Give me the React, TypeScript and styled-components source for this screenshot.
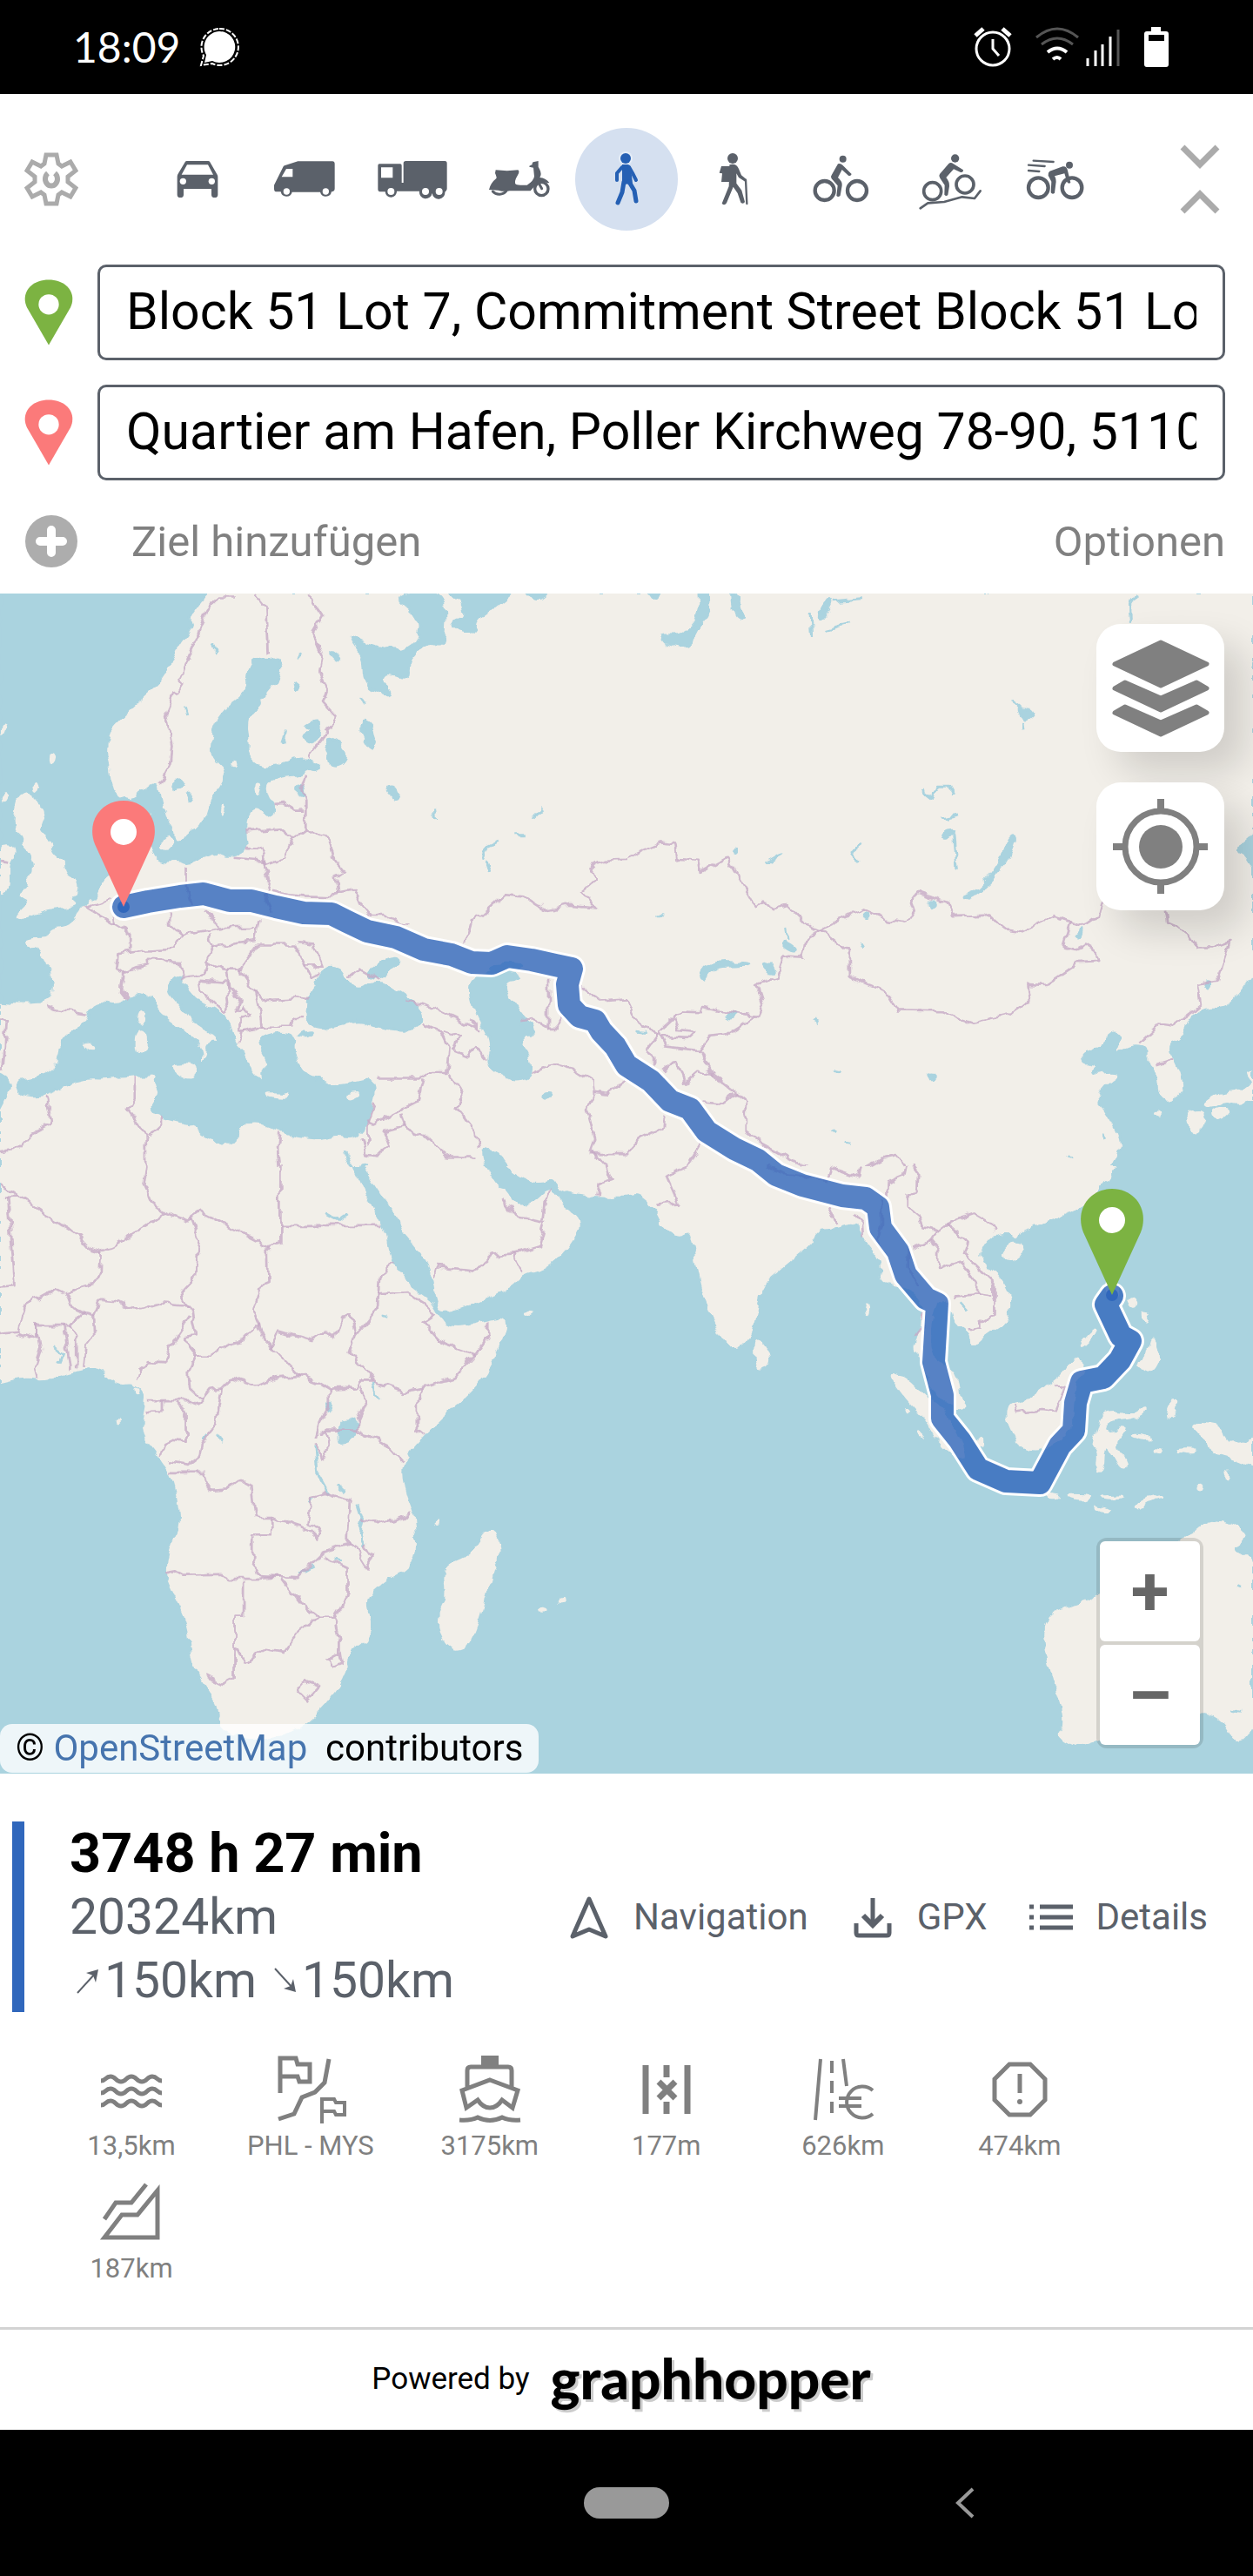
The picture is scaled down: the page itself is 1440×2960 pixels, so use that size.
import React from "react";
import styled, { createGlobalStyle } from "styled-components";

const GlobalStyle = createGlobalStyle`
  * { box-sizing: border-box; }
  body { margin: 0; background: #fff; }
  button, input { font: inherit; color: inherit; }
  svg { display: block; flex: none; }
`;

const slate = "#5b616a";
const grey = "#808080";
const blue = "#3067bc";

const Page = styled.div`
  display: flex;
  flex-direction: column;
  min-height: 100vh;
  font-family: Roboto, "Liberation Sans", sans-serif;
  color: #000;
`;

const PlainButton = styled.button`
  display: flex;
  align-items: center;
  padding: 0;
  border: 0;
  background: none;
  cursor: pointer;
`;

/* ---------- system bars ---------- */

const StatusBar = styled.div`
  display: flex;
  align-items: center;
  justify-content: space-between;
  height: 108px;
  padding: 0 94px 0 84px;
  background: #000;
  color: #fff;
`;

const Clock = styled.div`
  display: flex;
  align-items: center;
  gap: 22px;
  font-family: Lato, "Open Sans", sans-serif;
  font-size: 48px;
  line-height: 60px;
`;

const NavBar = styled.nav`
  display: grid;
  grid-template-columns: 1fr 98px 1fr;
  align-items: center;
  height: 168px;
  background: #000;
`;

const HomePill = styled(PlainButton)`
  grid-column: 2;
  height: 36px;
  border-radius: 18px;
  background: #999;
`;

const BackButton = styled(PlainButton)`
  justify-self: center;
  padding-left: 8px;
`;

/* ---------- search panel ---------- */

const Toolbar = styled.header`
  display: grid;
  grid-template-columns: 1fr auto 1fr;
  align-items: center;
  padding: 39px 28px;
`;

const Profiles = styled.div`
  display: flex;
  gap: 5px;
`;

const ProfileButton = styled(PlainButton)<{ $active?: boolean }>`
  width: 118px;
  height: 118px;
  border-radius: 50%;
  background: ${(p) => (p.$active ? "#d5e0f0" : "none")};
  color: ${(p) => (p.$active ? "#2560b4" : slate)};
`;

const Collapse = styled(PlainButton)`
  justify-self: end;
  padding-right: 10px;
`;

const Waypoints = styled.div`
  display: flex;
  flex-direction: column;
  gap: 28px;
  padding: 0 32px 18px 28px;
`;

const Waypoint = styled.label`
  display: flex;
  align-items: center;
  gap: 28px;
`;

const AddressInput = styled.input`
  flex: 1;
  min-width: 0;
  height: 110px;
  padding: 0 30px 4px;
  border: 3px solid ${slate};
  border-radius: 10px;
  background: #fff;
  font-size: 59px;
`;

const PanelActions = styled.div`
  display: flex;
  align-items: center;
  justify-content: space-between;
  height: 84px;
  color: ${grey};
  font-size: 49px;
`;

const AddButton = styled(PlainButton)`
  gap: 61px;
`;

/* ---------- map ---------- */

const MapArea = styled.main`
  position: relative;
  flex: 1;
  min-height: 1355px;
  overflow: hidden;
  background: #aad3df;
`;

const MapDrawing = styled.svg`
  position: absolute;
  inset: 0;
  width: 100%;
  height: 100%;
`;

const MapTools = styled.div`
  position: absolute;
  top: 35px;
  right: 33px;
  display: flex;
  flex-direction: column-reverse;
  gap: 35px;
`;

const MapTool = styled(PlainButton)`
  width: 147px;
  height: 147px;
  border-radius: 28px;
  background: #fff;
  color: ${grey};
  box-shadow: 24px 24px 44px rgba(0, 0, 0, 0.14);
`;

const ZoomControl = styled.div`
  position: absolute;
  right: 57px;
  bottom: 29px;
  display: flex;
  flex-direction: column;
  gap: 4px;
  padding: 4px;
  border-radius: 12px;
  background: rgba(0, 0, 0, 0.12);
`;

const ZoomButton = styled(PlainButton)`
  justify-content: center;
  width: 115px;
  height: 115px;
  border-radius: 6px;
  background: #fff;
  color: #666;
  font-size: 80px;
  font-weight: 700;
  line-height: 80px;
`;

const Attribution = styled.div`
  position: absolute;
  left: 0;
  bottom: 1px;
  padding: 0 18px;
  border-radius: 14px;
  background: rgba(255, 255, 255, 0.8);
  font-size: 42px;
  line-height: 56px;
  white-space: pre;
`;

const MapLink = styled.a`
  color: #4674ae;
  text-decoration: none;
`;

/* ---------- result ---------- */

const Result = styled.section`
  padding: 55px 52px 49px 14px;
`;

const Summary = styled.div`
  display: flex;
  align-items: center;
  justify-content: space-between;
  padding-left: 52px;
  border-left: 14px solid ${blue};
`;

const Figures = styled.div`
  color: ${slate};
  font-size: 57px;
  line-height: 73px;
`;

const Duration = styled.div`
  color: #000;
  font-size: 63px;
  font-weight: 700;
`;

const Climb = styled.div`
  display: flex;
  align-items: center;
  gap: 12px;
`;

const ClimbPart = styled.span`
  display: flex;
  align-items: center;
`;

const Actions = styled.div`
  display: flex;
  gap: 46px;
`;

const Action = styled(PlainButton)`
  gap: 23px;
  color: ${slate};
  font-size: 42px;
`;

const Hints = styled.div`
  display: flex;
  flex-wrap: wrap;
  gap: 16px 63px;
  padding: 47px 0 0 67px;
  color: ${grey};
`;

const Hint = styled(PlainButton)`
  flex-direction: column;
  gap: 4px;
  min-width: 140px;
  font-size: 31px;
  line-height: 37px;
`;

const Footer = styled.footer`
  display: flex;
  align-items: center;
  justify-content: center;
  gap: 24px;
  height: 118px;
  padding: 0 12px 3px 0;
  border-top: 3px solid #d3d3d3;
  font-size: 35px;
`;

const Logo = styled.a`
  color: #000;
  font-family: Lato, "Open Sans", sans-serif;
  font-size: 64px;
  font-weight: 900;
  line-height: 72px;
  text-decoration: none;
  text-shadow: 3px 3px 0 #ccc;
`;

/* ---------- icons ---------- */

type StrokeProps = { size: number; w?: number; children: React.ReactNode; color?: string };

const LineIcon = ({ size, w = 5, children, color = "currentColor" }: StrokeProps) => (
  <svg width={size} height={size} viewBox={`0 0 ${size} ${size}`} fill="none" stroke={color} strokeWidth={w} aria-hidden="true">
    {children}
  </svg>
);

const Pin = ({ color }: { color: string }) => (
  <svg width="56" height="76" viewBox="106 919 72 124" preserveAspectRatio="none" aria-hidden="true">
    <path d="M142 1042 L110 972 C100 946 115 920 142 920 C169 920 184 946 174 972Z" fill={color} />
    <ellipse cx="142" cy="966" rx="15" ry="19" fill="#fff" />
  </svg>
);

const WheelPair = ({ a, b, r, w = 13 }: { a: number[]; b: number[]; r: number; w?: number }) => (
  <g fill="none" stroke="currentColor" strokeWidth={w}>
    <circle cx={a[0]} cy={a[1]} r={r} />
    <circle cx={b[0]} cy={b[1]} r={r} />
  </g>
);

const line = { fill: "none", stroke: "currentColor", strokeLinecap: "round", strokeLinejoin: "round" } as const;

const profiles: { name: string; box: string; art: React.ReactNode; active?: boolean }[] = [
  {
    name: "Auto",
    box: "-30 21 354 354",
    art: (
      <>
        <path fillRule="evenodd" d="M107 135 H181 Q185 135 187 139 L212 182 Q214 185 214 190 V251 Q214 261 203 261 Q192 261 192 251 V231 H96 V251 Q96 261 85 261 Q74 261 74 251 V190 Q74 185 76 181 L101 139 Q103 135 107 135Z M108 148 L89 182 H198 L180 148Z" />
        <circle cx="94" cy="205" r="11" fill="#fff" />
        <circle cx="193" cy="205" r="11" fill="#fff" />
      </>
    ),
  },
  {
    name: "Lieferwagen",
    box: "339 21 354 354",
    art: (
      <>
        <path fillRule="evenodd" d="M490 136 H609 Q617 136 617 145 V230 Q617 240 606 241 A20 20 0 0 1 567 242 H470 A20 20 0 0 1 431 241 H414 Q408 240 408 230 V218 L440 154 Q441 151 446 150Z M450 162 L434 190 H472 V162Z" />
        <circle cx="451" cy="240" r="11" fill="#fff" />
        <circle cx="586" cy="240" r="11" fill="#fff" />
      </>
    ),
  },
  {
    name: "LKW",
    box: "708 21 354 354",
    art: (
      <>
        <path fillRule="evenodd" d="M771 145 H843 Q848 145 848 151 V210 H854 V143 Q854 135 862 135 H997 Q1004 135 1004 143 V232 Q1002 240 997 242 A20 20 0 0 1 953 246 A20 20 0 0 1 909 239 H831 A20 20 0 0 1 791 241 H772 Q766 240 766 233 V151 Q766 145 771 145Z M777 157 V193 H817 V157Z" />
        <circle cx="811" cy="240" r="12" fill="#fff" />
        <circle cx="930" cy="240" r="12" fill="#fff" />
        <circle cx="977" cy="240" r="12" fill="#fff" />
      </>
    ),
  },
  {
    name: "Roller",
    box: "1077 21 354 354",
    art: (
      <>
        <path d="M1172 166 Q1212 171 1249 166 Q1256 171 1248 184 Q1232 210 1243 216 Q1248 219 1280 218 Q1303 203 1305 188 L1302 158 L1288 155 V152 L1298 147 Q1297 139 1304 138 L1319 135 V150 Q1317 154 1323 163 Q1332 180 1324 192 Q1344 194 1357 210 L1352 211 Q1330 203 1312 215 L1292 238 H1220 Q1200 242 1181 236 L1149 234 Q1154 211 1174 195 Q1177 193 1170 177Z" />
        <path {...line} strokeWidth="9" d="M1162 240 A27 21 0 0 0 1208 239" />
        <circle cx="1330" cy="231" r="23" fill="none" stroke="currentColor" strokeWidth="10" />
        <path {...line} strokeWidth="9" d="M1318 207 L1331 230" />
      </>
    ),
  },
  {
    name: "Zu Fuß",
    box: "662 147 118 118",
    active: true,
    art: (
      <>
        <circle cx="720" cy="182" r="8" fill="#e4ecf7" />
        <circle cx="720" cy="182" r="6" />
        <path d="M716 189 H722 Q725 189 726 193 L728 211 L716 212 Z" />
        <path {...line} strokeWidth="4" d="M716 192 L710 199 L710 207 M724 192 L728 199 L732 207" />
        <path {...line} strokeWidth="5" d="M718 209 L716 221 L711 233 M724 209 L730 219 L732 231" />
      </>
    ),
  },
  {
    name: "Wandern",
    box: "135 21 354 354",
    art: (
      <>
        <circle cx="309" cy="126" r="18" />
        <path d="M270 153 H300 V207 H270 L273 178 L263 176Z" />
        <path d="M298 148 Q322 142 330 162 L339 184 L356 198 L352 206 L330 192 L322 178 V212 L340 236 L351 276 Q346 285 337 278 L326 246 L311 224 L288 280 Q280 291 272 281 L296 222Z" />
        <path {...line} strokeWidth="7" d="M354 200 L358 282" />
      </>
    ),
  },
  {
    name: "Fahrrad",
    box: "504 21 354 354",
    art: (
      <>
        <WheelPair a={[626, 237]} b={[738, 237]} r={33} />
        <circle cx="689" cy="128" r="12" />
        <path d="M672 145 Q680 141 688 149 L719 180 Q716 189 708 185 L686 165 L672 192 Q688 206 686 220 L680 254 Q673 262 667 255 L671 220 L650 196 Q645 191 650 184Z" />
      </>
    ),
  },
  {
    name: "Mountainbike",
    box: "873 21 354 354",
    art: (
      <>
        <WheelPair a={[998, 239]} b={[1110, 216]} r={30} w={11} />
        <circle cx="1076" cy="126" r="14" />
        <path d="M1054 144 Q1061 138 1070 145 L1104 166 Q1104 176 1095 174 L1071 163 L1045 192 Q1057 206 1056 222 L1051 252 Q1045 259 1039 251 L1040 218 L1024 194 Q1018 187 1023 180Z" />
        <path {...line} strokeWidth="8" d="M956 298 L982 280 L1038 276 L1100 259 L1143 264 L1163 238" />
      </>
    ),
  },
  {
    name: "Rennrad",
    box: "1242 21 354 354",
    art: (
      <>
        <WheelPair a={[1363, 227]} b={[1479, 227]} r={34} />
        <circle cx="1470" cy="149" r="12" />
        <path d="M1402 170 L1447 154 Q1461 152 1464 168 L1474 209 Q1468 216 1462 208 L1453 178 L1419 187 Q1426 198 1423 214 L1419 245 Q1412 252 1406 244 L1408 206 L1397 185 Q1396 174 1402 170Z" />
        <path {...line} strokeWidth="7" d="M1346 134 L1415 138 M1329 149 L1385 153 M1329 168 L1366 171" />
      </>
    ),
  },
];

/* ---------- map geometry ---------- */

type Tile = {
  frame: [number, number, number, number];
  box: string;
  base: "land" | "water";
  water?: string[];
  land?: string[];
  lakes?: string;
  borders: string[];
};

const tiles: Tile[] = [
  {
    frame: [0, 680, 720, 680],
    box: "0 0 1568 1568",
    base: "land",
    water: [
      "0,0 520,0 490,40 470,75 480,95 445,140 430,190 400,240 365,270 345,290 310,325 270,370 263,430 275,470 277,515 300,545 330,552 360,530 390,505 400,530 405,580 430,620 432,655 440,662 462,660 470,640 510,625 525,560 560,505 570,470 530,435 530,400 540,345 575,300 605,280 622,245 617,225 630,185 665,172 700,185 705,215 680,250 655,280 640,310 615,335 622,400 620,435 655,465 690,465 735,445 770,440 805,465 770,470 750,485 700,488 665,505 670,540 685,560 680,595 665,597 650,570 625,575 613,610 615,650 618,680 590,700 560,700 545,687 500,705 470,722 450,710 400,715 385,690 370,620 385,570 362,600 360,660 330,720 265,750 250,780 235,815 200,835 180,880 120,890 125,910 60,915 65,940 100,945 105,980 130,1000 125,1085 60,1090 0,1085",
      "40,1310 60,1290 115,1288 150,1240 152,1195 185,1160 222,1140 225,1105 245,1088 290,1100 325,1080 350,1062 375,1075 395,1110 440,1150 490,1190 505,1215 500,1250 520,1230 515,1190 555,1195 520,1160 480,1135 460,1100 425,1060 425,1030 445,1015 460,1020 455,1040 495,1090 570,1125 580,1180 600,1220 640,1285 660,1300 655,1265 675,1250 655,1215 650,1185 700,1165 740,1180 735,1210 745,1250 770,1290 800,1292 830,1310 880,1305 935,1290 935,1350 905,1445 835,1435 790,1450 700,1430 635,1400 590,1425 590,1460 560,1465 500,1430 490,1410 400,1390 375,1365 400,1330 385,1300 395,1280 340,1280 270,1290 200,1288 110,1335 50,1330",
      "0,1280 20,1290 25,1320 0,1370",
      "820,990 855,1000 870,1030 895,1055 935,1035 980,1045 1050,1100 1060,1145 1020,1165 930,1150 900,1133 850,1145 800,1160 760,1130 770,1080 800,1020",
      "915,1015 950,980 1005,965 975,1010 940,1028",
      "1190,1020 1230,1010 1305,1005 1300,1025 1265,1030 1260,1060 1290,1095 1300,1120 1340,1165 1305,1170 1305,1200 1325,1225 1330,1285 1285,1295 1240,1275 1217,1245 1230,1190 1190,1120 1172,1050",
      "810,390 840,395 870,430 860,455 835,465 825,450 828,425",
      "865,110 905,135 990,158 1035,145 1055,100 1045,60 980,5 1085,0 1115,25 1110,150 1070,130 1020,190 1025,235 965,210 950,235 980,255 975,278 930,255 910,230 910,175",
      "1125,0 1285,0 1240,40 1195,70 1190,110 1140,105 1133,75 1165,65 1150,20",
      "905,340 930,350 935,385 945,400 930,420 905,380",
      "1200,1480 1240,1470 1265,1520 1300,1550 1390,1555 1400,1568 1240,1568",
      "860,1470 885,1530 900,1545 905,1500 945,1568 895,1568",
      "965,520 985,510 1000,535 990,550 970,530",
      "430,510 455,495 460,515 430,530",
      "465,550 480,525 475,560",
      "740,180 765,165",
      "745,510 760,520 760,555 748,540",
      "735,240 755,250 745,262",
      "760,355 800,340 800,380 780,405 755,385 785,370",
      "740,1175 790,1165 770,1180",
      "1305,1130 1335,1150 1340,1170 1310,1165",
      "1300,1000 1300,985 1230,985 1220,1010",
      "1320,0 1375,0 1345,30",
      "820,150 860,185 840,180",
      "1360,1328 1385,1330 1370,1345",
    ],
    land: [
      "50,535 80,530 85,560 118,570 100,620 95,640 120,655 130,695 155,715 160,755 193,765 190,800 175,815 195,830 110,840 65,862 38,862 80,820 45,805 70,790 70,765 90,735 75,690 55,670 60,645 35,625 40,570",
      "0,680 30,675 35,700 20,720 22,790 0,800",
      "352,1105 360,1110 358,1150 345,1135",
      "342,1168 365,1160 365,1215 342,1228",
      "430,1252 490,1250 482,1290 445,1275",
      "665,1328 725,1332 715,1340 668,1334",
      "860,1338 905,1328 875,1348",
      "555,565 562,575 552,600",
      "125,435 140,430 130,465",
      "5,355 15,360 5,380",
      "210,1200 232,1198 222,1215",
      "870,1025 900,1008 920,1040 890,1055",
      "410,655 432,655 425,690 400,680",
      "640,505 655,515 645,545",
      "85,510 98,508 90,530",
      "5,545 20,535 10,560",
      "580,448 595,452 588,465",
    ],
    borders: [
      "590,15 545,15 520,45 490,130 450,225 460,240 445,265 430,268 415,320 430,410 425,460 400,510",
      "635,5 665,45 670,160",
      "770,5 808,65 785,105 808,165 800,210 818,260 808,290 842,330 820,370 770,438",
      "765,485 755,520 765,560 765,630",
      "685,560 705,558 735,578 760,578",
      "615,635 700,628 735,655 765,632 820,655 830,700 862,745 840,755 845,790 885,782 905,830 930,860 970,860 1020,885",
      "735,655 712,705 665,722 650,680 618,678",
      "585,705 660,712 672,760 665,800 680,850",
      "465,730 465,775 478,830",
      "675,795 760,808 830,810 845,790",
      "1165,930 1180,870 1205,860 1265,803 1310,808 1365,843 1420,832 1490,838 1455,797 1495,760 1478,730 1510,712 1568,710",
      "425,850 425,880 455,910 500,900 560,890 510,850",
      "560,890 640,890",
      "455,910 435,945 350,950 295,960 290,995 310,1010 305,1060 320,1080",
      "325,950 325,905 270,870 215,835 280,815",
      "290,885 285,860",
      "310,1010 345,995 370,990 370,975 450,980 460,1020 515,1010 520,985",
      "525,905 530,940 640,925 650,870",
      "530,940 515,980 560,1000 600,1000 645,935 740,935 780,1020 800,1010",
      "745,930 785,935 805,990 765,990",
      "600,1000 640,1060 660,1080 740,1075 775,1080",
      "500,1030 570,1035 575,1090 560,1115 505,1060 500,1030",
      "570,1000 575,1050 600,1080 590,1115",
      "640,1060 650,1110 655,1150 730,1150 735,1130 755,1130",
      "595,1110 610,1095 625,1120 600,1130 600,1165 610,1165 600,1200",
      "610,1165 655,1150",
      "115,1095 140,1108 220,1120",
      "0,1135 15,1140 5,1270",
      "1060,1145 1105,1165 1125,1210 1120,1275 1070,1275 1050,1290 945,1290",
      "1020,1085 1080,1100 1140,1130 1200,1160 1175,1130",
      "1110,1165 1150,1180 1135,1215 1170,1230 1190,1208 1215,1240",
      "1060,1290 1045,1350 935,1410 915,1400",
      "1125,1275 1160,1330 1145,1370 1190,1430 1200,1480",
      "1000,1385 1010,1420 1060,1440 1125,1500 1190,1500",
      "1010,1415 960,1430 975,1470 940,1495 915,1490 905,1445",
      "940,1350 920,1410 920,1470",
      "1330,1275 1390,1248 1430,1260 1480,1295 1485,1330 1470,1370 1490,1450 1480,1480 1520,1530 1525,1568",
      "1485,1325 1520,1330 1568,1295",
      "1480,1490 1568,1490",
      "1372,1030 1372,1155 1330,1130 1305,1135",
      "1372,1155 1395,1155 1410,1120",
      "1450,1040 1505,1085 1568,1080",
      "115,1335 130,1410 75,1440 40,1480 0,1485",
      "335,1285 335,1340 320,1370 365,1440 367,1568",
      "405,1390 405,1410 370,1445",
      "700,1435 695,1480 702,1568",
      "0,715 20,718",
      "875,1020 900,1000 950,1030",
    ],
    lakes: "M1205,710 L1220,675 L1250,660 M1215,715 L1225,742 M1292,645 L1315,645 M1335,600 L1358,575 M715,370 L708,405 M465,305 L470,325 M530,140 L548,160 M905,280 L915,300 M1090,575 L1092,600",
  },
  {
    frame: [720, 680, 720, 680],
    box: "0 0 1568 1568",
    base: "land",
    water: [
      "1568,1020 1530,1075 1500,1105 1440,1100 1405,1140 1400,1170 1355,1205 1375,1240 1395,1290 1395,1335 1330,1358 1325,1270 1300,1255 1305,1210 1275,1200 1245,1210 1220,1228 1238,1180 1220,1165 1180,1215 1140,1225 1145,1245 1175,1250 1170,1280 1205,1270 1245,1275 1200,1305 1175,1340 1210,1390 1235,1440 1240,1480 1185,1568 1568,1568",
      "1568,640 1520,685 1550,695 1568,725",
      "180,0 205,0 212,50 180,90 155,148 110,142 85,125 90,110 140,115 185,70",
      "262,0 280,10 275,50 300,70 275,68 265,45",
      "55,0 85,0 75,30",
      "500,15 520,25 490,75 480,70",
      "960,648 975,650 950,720 890,790 850,815 838,805 880,795 935,720",
      "180,1015 210,980 305,982 305,992 215,992 190,1035",
      "240,1118 285,1112 262,1132",
      "760,815 778,822 765,850",
      "750,1280 765,1275 775,1292 758,1295",
      "590,850 612,855 600,868",
      "340,985 360,990 370,1010 355,1008",
      "390,920 425,945 415,950 392,935",
      "980,300 1025,320 1000,345 985,325",
      "1450,1030 1470,1035 1458,1055",
      "1125,905 1142,890 1135,918",
      "265,680 278,680 270,695",
      "790,635 820,630 815,645 800,658",
    ],
    land: [
      "1568,1300 1550,1325 1480,1330 1440,1360 1470,1365 1500,1345 1530,1355 1568,1345",
      "1400,1385 1440,1370 1447,1400 1425,1445 1410,1420",
      "1465,1375 1505,1365 1508,1380 1475,1400",
      "1555,1275 1568,1270 1568,1295",
      "1325,1380 1340,1382 1330,1392",
    ],
    borders: [
      "0,705 40,685 85,665 125,670 130,708 180,712 185,742 250,705 322,835 335,820 370,840 400,830 445,878 485,895",
      "485,895 590,840 650,868 700,878 718,850 710,825 730,797 800,822 815,858 900,855 945,893 990,900 1070,860 1145,885 1180,860 1190,820",
      "485,895 555,955 555,1020 650,1060 680,1110 790,1112 865,1143 960,1120 1010,1080 1005,1040 1050,1042 1130,985 1185,982 1180,955 1150,935 1125,948 1095,940 1115,870",
      "1350,845 1355,875 1400,895 1430,942 1465,942 1510,925 1480,1030 1430,1040 1437,1095 1420,1110 1370,1150 1335,1145 1285,1195",
      "1325,1255 1370,1240",
      "485,895 450,920 443,968 390,965 375,1020 325,1040 340,1090 325,1125 190,1100 185,1112 135,1110 80,1165 100,1205 180,1215 205,1180 250,1175 325,1125",
      "0,1080 20,1130 75,1175",
      "120,1130 130,1160 170,1165 150,1185 90,1180",
      "185,1215 215,1280 270,1325 300,1350 300,1430 345,1465 440,1520 500,1535",
      "80,1170 50,1215 70,1230 70,1260",
      "90,1270 125,1240 145,1300 180,1270 215,1280",
      "195,1350 240,1355 275,1325",
      "95,1390 90,1420 35,1450 0,1490",
      "190,1460 150,1530 110,1535 95,1568",
      "500,1535 520,1560 580,1560 580,1535 550,1525 515,1530",
      "580,1535 640,1500 675,1492 700,1530 650,1568",
      "700,1530 730,1540 730,1568",
    ],
    lakes: "M740,525 L765,545 L780,515 L810,515 L820,535 M820,640 L828,735 M790,600 L830,590 M560,690 L592,665 M562,690 L575,720 M350,715 L390,690 M462,60 L465,120 M500,100 L555,85 M520,25 L590,18 M1275,10 L1260,35 L1262,85 M965,290 L985,305 M995,345 L997,370 M400,890 L405,920 M585,940 L590,930 M515,1425 L525,1432 M548,1455 L558,1458 M1190,1440 L1195,1450 M1105,1495 L1112,1502 M520,1265 L535,1268 M75,855 L90,855 M25,1165 L50,1168 M470,1132 L482,1138",
  },
  {
    frame: [0, 1340, 720, 700],
    box: "0 0 1568 1568",
    base: "water",
    land: [
      "0,555 60,540 115,550 200,518 255,515 290,562 340,555 370,590 350,680 400,745 430,790 445,850 455,920 430,965 412,1040 430,1090 470,1170 485,1290 520,1340 555,1400 545,1440 600,1475 700,1465 760,1440 830,1365 865,1310 870,1250 920,1220 925,1170 910,1115 960,1065 1020,1035 1040,1000 1035,900 1015,850 1000,790 1015,740 1060,690 1110,635 1160,600 1215,535 1260,440 1268,390 1220,400 1125,422 1095,385 1080,350 1015,305 970,230 960,160 930,110 880,0 0,0",
      "910,0 960,80 1000,130 1005,165 1045,210 1085,270 1095,370 1130,372 1280,310 1300,280 1360,265 1410,225 1455,150 1430,115 1390,85 1375,55 1330,100 1285,105 1265,60 1245,60 1210,0",
      "1270,0 1320,35 1355,42 1385,30 1400,60 1490,75 1568,75 1568,0",
      "1228,930 1245,965 1250,1000 1235,1030 1180,1230 1140,1250 1105,1220 1095,1160 1120,1110 1112,1050 1125,1025 1165,1010 1195,980",
      "1315,372 1335,375 1322,382",
      "1350,1137 1368,1140 1362,1148",
      "1400,1115 1412,1113 1402,1128",
      "292,650 304,652 298,658",
      "340,572 348,575 344,588",
      "1092,915 1100,918 1096,924",
    ],
    water: ["850,655 895,652 890,700 862,712 845,715", "818,610 835,605 822,630"],
    lakes: "M788,720 L795,790 L825,845 M895,870 L908,910 L900,945 L915,975 M750,1050 L785,1030 M935,555 L940,585 L952,600 M845,825 L862,842 M775,865 L785,850 M815,120 L850,140 L870,125 M135,465 L160,485 L150,510 M510,705 L520,690 M550,690 L558,708 M960,385 L970,388 M835,1010 L855,1015",
    borders: [
      "367,0 360,50 380,95 415,120 280,210 250,222 225,215 195,180 0,45",
      "15,80 45,80",
      "20,80 38,305 0,308",
      "252,222 250,270 235,305 165,325 180,365 210,380",
      "415,120 470,140 500,118 670,207 702,198 702,0",
      "702,152 955,152",
      "478,135 498,190 488,285 455,320 460,350 480,370 490,435 460,440 490,490",
      "235,385 250,347 290,350 350,370 400,355 470,360",
      "475,385 440,440 410,505 375,502 350,520 343,550",
      "670,207 672,300 650,310 632,370 665,450 680,465 750,540",
      "490,490 525,490 570,460 610,450 650,408",
      "680,465 700,425 780,450 810,430 840,440 855,385 875,382 890,435",
      "890,435 945,365 950,280 990,250",
      "945,330 1020,325 1060,350 1090,380 1060,400 1110,455 1190,485 1220,440 1220,400",
      "1190,485 1135,545 1060,570 1010,582 940,555 875,480 890,435",
      "1060,570 1045,600 1045,680 1060,692",
      "750,540 800,560 825,575 890,572 900,552 935,552",
      "900,565 915,615 895,660 895,680 970,720 1005,760",
      "825,575 825,615 800,660 790,700",
      "895,678 820,678 800,690",
      "820,680 825,720 805,755 790,715",
      "490,490 472,530 475,570 505,600 505,615",
      "505,600 525,575 555,570 580,545 640,565 690,545 750,540",
      "555,570 540,665 505,720 500,745 470,768 425,760",
      "370,605 480,605 505,615",
      "365,632 405,630 405,605",
      "440,610 465,630 465,710 430,705 410,715 400,745",
      "425,788 510,788 530,835 570,832 600,810 630,820 640,905 680,905 680,948 632,948 632,1020 655,1055",
      "680,905 770,935 795,958 803,935 770,920 780,850 815,840 885,865",
      "875,865 870,970 810,995 745,1060 655,1055",
      "412,1045 440,1040 460,1052 550,1050 575,1062 640,1062 700,1058",
      "610,1068 610,1155 587,1155 587,1320 560,1335 515,1312",
      "590,1235 612,1280 660,1240 710,1250 750,1195 795,1162 755,1130 705,1062",
      "795,1162 835,1162 870,1105 870,1035 810,1005",
      "835,1165 848,1215 848,1255 822,1270 835,1290 855,1280 850,1250",
      "742,1352 765,1325 795,1340 765,1376 742,1352",
      "905,910 950,920 1030,895",
      "870,970 905,985 900,1015 915,1040 932,1000 915,970",
      "1088,285 1095,260 1185,270 1230,230 1285,225 1350,205 1365,145 1290,130 1260,85",
      "1285,225 1305,275",
      "1360,140 1365,90 1380,60",
      "1495,75 1500,45 1530,35 1515,0",
      "0,430 45,425 60,360 140,315 160,325",
      "45,430 70,440 90,435 90,410 175,410",
      "90,410 100,470 85,520 92,545",
      "160,410 170,480 175,520",
      "175,410 190,440 190,518",
      "210,515 215,460 238,430 235,385 205,378 175,410",
    ],
  },
  {
    frame: [720, 1340, 720, 700],
    box: "0 0 1568 1568",
    base: "water",
    land: [
      "0,0 1225,0 1185,55 1150,100 1060,140 985,165 975,195 965,165 920,170 880,215 890,250 930,285 960,340 955,395 900,430 865,465 860,430 820,400 810,350 770,340 750,480 800,515 830,550 830,600 850,625 800,610 760,560 735,480 720,475 745,400 735,330 700,310 665,300 635,295 645,260 625,220 600,190 575,140 520,158 475,160 465,195 400,250 330,310 320,415 290,460 265,475 240,440 185,310 165,160 130,185 90,150 75,110 30,68 0,75",
      "325,440 350,465 362,500 350,518 325,522 320,480",
      "945,220 965,200 995,205 985,230 965,243 947,238",
      "655,530 700,545 740,590 790,620 830,700 850,760 820,745 780,710 750,650 700,600",
      "955,615 1000,610 1050,570 1090,540 1105,510 1130,500 1150,520 1120,560 1110,640 1110,680 1060,720 1020,735 980,715 970,690 952,650",
      "1190,645 1210,632 1270,640 1302,618 1285,645 1200,655 1195,690 1262,672 1215,705 1255,780 1235,775 1210,725 1195,722 1192,785 1180,780 1185,735 1165,725 1180,680",
      "1280,505 1310,480 1318,440 1332,480 1332,500 1315,530 1290,520",
      "1210,285 1235,320 1230,345 1200,330",
      "1285,370 1308,380 1305,405 1290,395",
      "1250,340 1280,350 1270,370",
      "1180,415 1160,445 1130,470 1155,435",
      "1415,658 1490,668 1500,705 1530,725 1568,700 1568,770 1500,740 1470,740 1460,710 1430,688",
      "1420,945 1460,908 1550,935 1525,990 1568,1020 1568,1440 1530,1490 1500,1430 1440,1400 1400,1400 1230,1465 1180,1475 1130,1495 1080,1465 1098,1440 1095,1400 1060,1290 1045,1200 1060,1160 1120,1130 1180,1110 1410,950",
      "1050,838 1090,850 1060,852",
      "1100,845 1170,850 1150,860 1105,855",
      "1185,850 1250,848 1215,856",
      "1345,848 1310,858 1270,888 1290,858",
      "1165,870 1210,885 1190,888",
      "1365,605 1378,610 1365,655 1352,640",
      "1365,730 1415,725 1425,740",
      "1320,728 1345,732 1332,742",
      "1500,780 1512,795 1500,812",
      "1430,820 1447,820 1437,838",
      "870,700 900,712 885,722",
      "600,355 608,355 600,395",
      "1260,690 1320,698 1290,702",
      "725,680 740,695 732,700",
      "700,625 710,635 702,640",
    ],
    water: ["1525,990 1540,970 1568,1010"],
    lakes: "M835,355 L850,372 M1525,1080 L1535,1085 M1515,1400 L1540,1405",
    borders: [
      "155,0 100,25 130,95 75,100",
      "505,100 525,150",
      "570,120 590,145 592,185",
      "345,0 400,20 500,35 510,5 580,30 585,0",
      "700,0 695,25 650,45 650,85",
      "715,0 730,20 728,60 705,75 705,105 735,130 745,155 780,165 760,190 715,215",
      "780,165 805,145 870,122 900,140 925,165",
      "800,145 855,195 845,225 920,300 920,380 885,400 885,415 855,420",
      "760,190 780,215 780,262 835,245 880,305 880,330 820,335",
      "880,330 915,335",
      "705,215 705,260 730,310",
      "740,375 745,405 725,440",
      "970,615 975,635 1040,625 1075,630 1100,570 1070,560",
      "640,90 640,150 625,200",
    ],
  },
];

const landFill = "#f2efe9";
const waterFill = "#aad3df";

/* Rounds a coastline through the midpoints of its edges; vertices on the tile frame stay sharp. */
const coast = (points: string) => {
  const v = points.split(" ").map((p) => p.split(",").map(Number));
  const mid = (a: number[], b: number[]) => `${(a[0] + b[0]) / 2} ${(a[1] + b[1]) / 2}`;
  const onFrame = (p: number[]) => p.some((n) => n === 0 || n === 1568);
  let d = `M${mid(v[v.length - 1], v[0])}`;
  v.forEach((p, i) => {
    const next = mid(p, v[(i + 1) % v.length]);
    d += onFrame(p) ? ` L${p[0]} ${p[1]} L${next}` : ` Q${p[0]} ${p[1]} ${next}`;
  });
  return d + "Z";
};

const Areas = ({ shapes, fill }: { shapes?: string[]; fill: string }) => (
  <g fill={fill} stroke={fill} strokeWidth="6" strokeLinejoin="round">
    {shapes?.map((p) => (
      <path key={p} d={coast(p)} />
    ))}
  </g>
);

const routePoints =
  "142,1042 170,1036 207,1030 234,1027 264,1035 289,1035 317,1042 349,1049 381,1050 399,1059 422,1070 455,1077 487,1091 519,1097 542,1106 565,1107 583,1099 611,1103 638,1109 657,1113 652,1131 654,1155 666,1168 684,1173 691,1185 707,1202 720,1224 748,1242 770,1265 793,1274 812,1300 844,1320 871,1333 892,1350 922,1362 968,1374 995,1377 1009,1387 1012,1411 1032,1438 1041,1465 1064,1492 1077,1498 1073,1565 1083,1603 1083,1630 1103,1655 1124,1688 1156,1702 1195,1704 1218,1661 1234,1644 1236,1612 1243,1588 1268,1583 1287,1563 1299,1541 1288,1535 1271,1499 1278,1489";

const routeLine = { points: routePoints, fill: "none", strokeLinejoin: "round", strokeLinecap: "round" } as const;

const MapPin = ({ x, y, color }: { x: number; y: number; color: string }) => (
  <g transform={`translate(${x} ${y})`}>
    <circle r="7" fill={blue} />
    <path d="M0 0 L-33 -72 C-43 -98 -26 -122 0 -122 C26 -122 43 -98 33 -72Z" fill={color} />
    <circle cy="-86" r="15" fill="#fff" />
  </g>
);

const WorldMap = () => (
  <MapDrawing viewBox="0 682 1440 1356" preserveAspectRatio="xMidYMid slice" role="img" aria-label="Karte">
    <filter id="rugged" filterUnits="userSpaceOnUse" x="0" y="680" width="1440" height="1360">
      <feTurbulence type="fractalNoise" baseFrequency="0.07" numOctaves="2" seed="4" />
      <feDisplacementMap in="SourceGraphic" scale="11" xChannelSelector="R" yChannelSelector="G" />
    </filter>
    <g filter="url(#rugged)">
      <rect x="600" y="680" width="240" height="660" fill={landFill} />
      {tiles.map((t, i) => (
        <svg key={i} x={t.frame[0]} y={t.frame[1]} width={t.frame[2]} height={t.frame[3]} viewBox={t.box} preserveAspectRatio="none">
          <rect width="1568" height="1568" fill={t.base === "land" ? landFill : waterFill} />
          {t.base === "land" && <Areas shapes={t.water} fill={waterFill} />}
          <Areas shapes={t.land} fill={landFill} />
          {t.base === "water" && <Areas shapes={t.water} fill={waterFill} />}
          <path d={t.lakes} fill="none" stroke={waterFill} strokeWidth="7" strokeLinejoin="round" />
          {t.borders.map((p) => (
            <polyline key={p} points={p} fill="none" stroke="#c5aac5" strokeOpacity="0.8" strokeWidth="6" strokeLinejoin="round" />
          ))}
        </svg>
      ))}
    </g>
    <mask id="route-casing" maskUnits="userSpaceOnUse" x="0" y="682" width="1440" height="1356">
      <rect x="0" y="682" width="1440" height="1356" fill="#fff" />
      <polyline {...routeLine} stroke="#000" strokeWidth="25" />
    </mask>
    <polyline {...routeLine} stroke="#fff" strokeWidth="32" mask="url(#route-casing)" />
    <polyline {...routeLine} stroke={blue} strokeWidth="26" opacity="0.8" />
    <MapPin x={142} y={1042} color="#fb7a7a" />
    <MapPin x={1278} y={1488} color="#7cb342" />
  </MapDrawing>
);

/* ---------- route hints ---------- */

const wave = "C13 32 12 27 18 27 S24 33 30 33 S36 27 42 27 S48 33 54 33 S60 27 66 27 S71 32 77 32";

const hints: { label: string; art: React.ReactNode }[] = [
  {
    label: "13,5km",
    art: [0, 14, 28].map((dy) => <path key={dy} transform={`translate(0 ${dy})`} d={`M7 32 ${wave}`} />),
  },
  {
    label: "PHL - MYS",
    art: (
      <>
        <path d="M7 46 V6 H25 L27 13 H41 V33 H29 L27 27 H7 M63 7 L58 34 L47 45 L32 51 L23 70 L5 76" />
        <path strokeWidth="4" d="M55 81 V53 H69 L71 57 H81 V71 H71 L69 67 H55" />
      </>
    ),
  },
  {
    label: "3175km",
    art: (
      <>
        <rect x="32" y="3" width="20" height="12" fill="currentColor" stroke="none" />
        <path d="M16 40 V20 Q16 16 20 16 H63 Q67 16 67 20 V40 M42 31 L74 43 L68 63 L56 54 Q50 63 42 63 Q34 63 28 54 L15 63 L10 43Z M7 77 Q20 78 28 74 Q42 81 56 74 Q64 78 77 77" />
      </>
    ),
  },
  {
    label: "177m",
    art: <path strokeWidth="7" d="M18 14 V70 M66 14 V70 M42 14 V28 M42 56 V70 M33 33 L52 52 M52 33 L33 52" />,
  },
  {
    label: "626km",
    art: <path strokeWidth="4" d="M16 7 L10 77 M29 9 V23 M29 32 V46 M29 56 V69 M42 7 L46 38 M76 43 A18 18 0 1 0 76 70 M37 52 H63 M37 61 H63" />,
  },
  {
    label: "474km",
    art: (
      <>
        <path d="M30 13 H54 L71 30 V54 L54 71 H30 L13 54 V30Z M42 24 V46" />
        <circle cx="42" cy="56" r="3" fill="currentColor" stroke="none" />
      </>
    ),
  },
  {
    label: "187km",
    art: <path d="M11 50 L24 31 H42 L59 10 M11 71 L31 45 H49 L72 17 V71Z" />,
  },
];

const ClimbArrow = ({ down }: { down?: boolean }) => (
  <svg width="40" height="36" viewBox="0 0 40 36" aria-hidden="true">
    <g transform={down ? "translate(0 36) scale(1 -1)" : undefined}>
      <path d="M9 32 L30 9" stroke="currentColor" strokeWidth="2" fill="none" />
      <path d="M33 5 L30 20 L27 12 L19 9Z" fill="currentColor" />
    </g>
  </svg>
);

export default function App() {
  return (
    <Page>
      <GlobalStyle />
      <StatusBar>
        <Clock>
          <span>18:09</span>
          <svg width="46" height="46" viewBox="0 0 46 46" aria-hidden="true">
            <path fill="#fff" d="M23 5 A18 18 0 1 1 15 39 L6 41 L8 32 A18 18 0 0 1 23 5Z" />
            <path fill="none" stroke="#fff" strokeWidth="2" strokeDasharray="6 2" d="M23 2 A21 21 0 1 1 15 42 L2 44 L5 33 A21 21 0 0 1 23 2Z" />
          </svg>
        </Clock>
        <svg width="230" height="52" viewBox="0 0 230 52" fill="none" stroke="#fff" aria-hidden="true">
          <circle cx="25" cy="28" r="19" strokeWidth="3" />
          <path strokeWidth="3" d="M25 17 V28 L32 36" />
          <path strokeWidth="5" d="M5 13 L14 5 M45 13 L36 5" />
          <path stroke="#555" strokeWidth="3" d="M75 15 Q99 -5 123 15 M81 23 Q99 9 117 23" />
          <path strokeWidth="4" d="M88 32 Q99 23 110 32 M94 40 Q99 36 103 40" />
          <path strokeWidth="3" d="M134 48 V39 M143 48 V30 M151 48 V23 M160 48 V14" />
          <path stroke="#555" strokeWidth="3" d="M169 48 V6" />
          <path stroke="none" fill="#fff" fillRule="evenodd" d="M207 3 H218 V8 H224 Q227 8 227 11 V46 Q227 49 224 49 H202 Q199 49 199 46 V11 Q199 8 202 8 H207Z M204 12 V19 H222 V12Z" />
        </svg>
      </StatusBar>

      <Toolbar>
        <PlainButton aria-label="Einstellungen">
          <LineIcon size={62} color="#ababab">
            <path d="M25 3 H37 L39 13 L43 16 L53 11 L59 21 L50 28 V34 L59 41 L53 51 L43 46 L39 49 L37 59 H25 L23 49 L19 46 L9 51 L3 41 L12 34 V28 L3 21 L9 11 L19 16 L23 13Z" />
            <path strokeWidth="6" d="M27 24 A7 8 0 1 0 35 24" />
          </LineIcon>
        </PlainButton>
        <Profiles>
          {profiles.map((p) => (
            <ProfileButton key={p.name} aria-label={p.name} aria-pressed={!!p.active} $active={p.active}>
              <svg width="118" height="118" viewBox={p.box} fill="currentColor" aria-hidden="true">
                {p.art}
              </svg>
            </ProfileButton>
          ))}
        </Profiles>
        <Collapse aria-label="Einklappen">
          <svg width="46" height="80" viewBox="0 0 46 80" fill="none" stroke="#ababab" strokeWidth="7" aria-hidden="true">
            <path d="M3 3 L23 23 L43 3 M3 77 L23 57 L43 77" />
          </svg>
        </Collapse>
      </Toolbar>

      <Waypoints>
        <Waypoint>
          <Pin color="#7cb342" />
          <AddressInput aria-label="Start" defaultValue="Block 51 Lot 7, Commitment Street Block 51 Lot 7" />
        </Waypoint>
        <Waypoint>
          <Pin color="#fb7a7a" />
          <AddressInput aria-label="Ziel" defaultValue="Quartier am Hafen, Poller Kirchweg 78-90, 51105 Köln" />
        </Waypoint>
        <PanelActions>
          <AddButton>
            <svg width="62" height="62" viewBox="0 0 62 62" aria-hidden="true">
              <circle cx="31" cy="31" r="30" fill="#adadad" />
              <path d="M31 18 V44 M18 31 H44" stroke="#fff" strokeWidth="10" strokeLinecap="round" />
            </svg>
            Ziel hinzufügen
          </AddButton>
          <PlainButton>Optionen</PlainButton>
        </PanelActions>
      </Waypoints>

      <MapArea>
        <WorldMap />
        <MapTools>
          <MapTool aria-label="Standort">
            <LineIcon size={147} w={7}>
              <circle cx="74" cy="74" r="41" />
              <circle cx="74" cy="74" r="25" fill="currentColor" stroke="none" />
              <path strokeWidth="8" d="M74 19 V34 M74 114 V128 M19 74 H34 M114 74 H128" />
            </LineIcon>
          </MapTool>
          <MapTool aria-label="Ebenen">
            <svg width="147" height="147" viewBox="0 0 147 147" fill="currentColor" stroke="currentColor" strokeWidth="5" strokeLinejoin="round" aria-hidden="true">
              <path d="M74 21 L127 46 L74 71 L21 46Z M33 67 L74 85 L115 67 L127 74 L74 99 L21 74Z M33 95 L74 113 L115 95 L127 102 L74 127 L21 102Z" />
            </svg>
          </MapTool>
        </MapTools>
        <ZoomControl>
          <ZoomButton aria-label="Vergrößern">+</ZoomButton>
          <ZoomButton aria-label="Verkleinern">–</ZoomButton>
        </ZoomControl>
        <Attribution>
          © <MapLink href="#osm">OpenStreetMap</MapLink>{"  contributors"}
        </Attribution>
      </MapArea>

      <Result>
        <Summary>
          <Figures>
            <Duration>3748 h 27 min</Duration>
            <div>20324km</div>
            <Climb>
              <ClimbPart>
                <ClimbArrow />
                150km
              </ClimbPart>
              <ClimbPart>
                <ClimbArrow down />
                150km
              </ClimbPart>
            </Climb>
          </Figures>
          <Actions>
            <Action>
              <LineIcon size={56}>
                <path strokeLinejoin="round" d="M28 7 L47 50 L28 42 L9 50Z" />
              </LineIcon>
              Navigation
            </Action>
            <Action>
              <LineIcon size={56}>
                <path d="M28 6 V36 M9 35 V46 Q9 49 12 49 H44 Q47 49 47 46 V35" />
                <path d="M17 26 L28 37 L39 26" strokeWidth="6" />
              </LineIcon>
              GPX
            </Action>
            <Action>
              <LineIcon size={56}>
                <path d="M15 16 H53 M15 28 H53 M15 40 H53 M3 16 H8 M3 28 H8 M3 40 H8" />
              </LineIcon>
              Details
            </Action>
          </Actions>
        </Summary>
        <Hints>
          {hints.map((h) => (
            <Hint key={h.label}>
              <LineIcon size={84}>{h.art}</LineIcon>
              {h.label}
            </Hint>
          ))}
        </Hints>
      </Result>

      <Footer>
        Powered by
        <Logo href="#graphhopper">graphhopper</Logo>
      </Footer>

      <NavBar>
        <HomePill aria-label="Startbildschirm" />
        <BackButton aria-label="Zurück">
          <svg width="22" height="36" viewBox="0 0 22 36" fill="none" stroke="#999" strokeWidth="4" aria-hidden="true">
            <path d="M20 2 L3 18 L20 34" />
          </svg>
        </BackButton>
      </NavBar>
    </Page>
  );
}
